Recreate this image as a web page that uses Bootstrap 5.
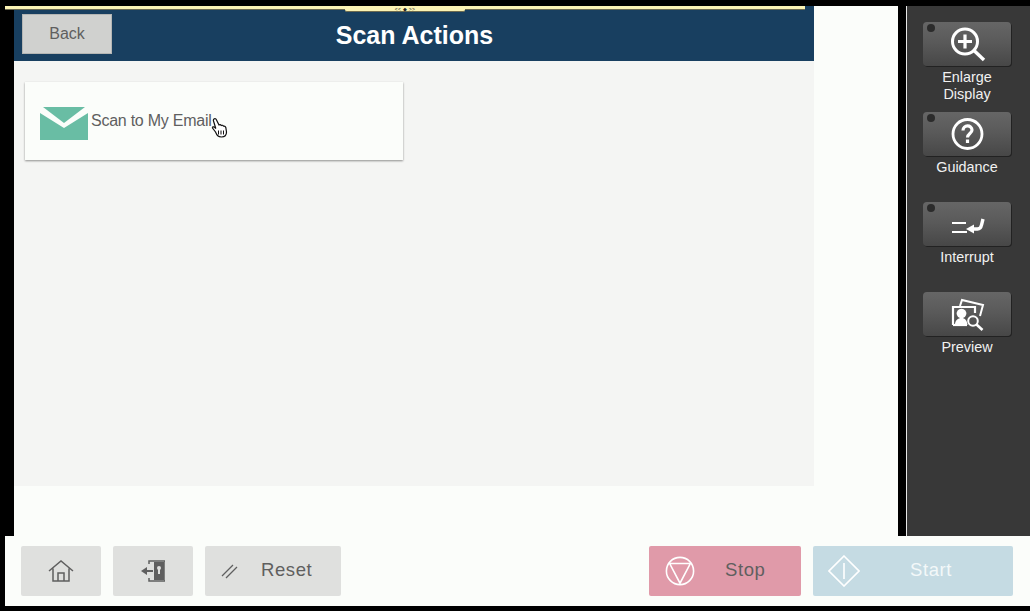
<!DOCTYPE html>
<html lang="en">
<head>
<meta charset="UTF-8">
<meta name="viewport" content="width=device-width, initial-scale=1">
<title>Scan Actions</title>
<link href="https://cdn.jsdelivr.net/npm/bootstrap@5.3.2/dist/css/bootstrap.min.css" rel="stylesheet">
<style>
    html, body { height: 611px; overflow: hidden; }
    body {
        background: #000;
        padding-top: 6px;
        font-family: "Liberation Sans", Arial, sans-serif;
        position: relative;
    }
    .top-strip {
        position: absolute; left: 5px; top: 6px; width: 800px; height: 4px; z-index: 5;
        background: #fbf3b4; border-bottom: 1px solid #6d6b50;
    }
    .top-tab {
        position: absolute; left: 340px; top: 2px; width: 120px; height: 4px;
        background: #fbf3b4; border-radius: 0 0 2px 2px;
        border-bottom: 1px solid #6d6b50;
    }
    .top-tab span {
        position: absolute; left: 0; right: 0; top: -2px; text-align: center;
        font-size: 5px; line-height: 6px; letter-spacing: .3px; color: #222;
    }
    .upper { height: 530px; padding-left: 14px; }
    .work { width: 884px; background: #fbfdfa; }
    .content { width: 800px; height: 480px; background: #f4f5f3; }
    .head {
        height: 55px; background: #183f60; padding-left: 8px; padding-top: 8px;
    }
    .back-btn {
        width: 90px; height: 40px; background: #d0d1cf; color: #5f5f5f;
        border: 1px solid #b5b6b4; font-size: 16px; line-height: 38px; text-align: center;
    }
    .head-title {
        position: absolute; left: 0; top: 13px; width: 800px; margin: 0;
        padding-left: 1px; text-align: center; color: #fff;
        font: bold 25px/32px "Liberation Sans", Arial, sans-serif;
    }
    .action-card {
        width: 378px; height: 78px; margin: 21px 0 0 11px; padding-left: 15px;
        background: #fbfdfa; color: #5f5f5f; font-size: 16px; letter-spacing: -.25px;
        box-shadow: 0 1px 2px rgba(0, 0, 0, .42);
    }
    .mail-icon { margin: 5px 3px 0 0; flex-shrink: 0; }
    .gap-line { width: 8px; }
    .side {
        flex: 1; background: #383838; border-left: 1px solid #e8e8e8;
        padding: 16px 0 0 16px;
    }
    .side-item { width: 88px; height: 90px; color: #f1f1f1; text-align: center; font-size: 14.4px; line-height: 17px; }
    .side-btn {
        position: relative; height: 44px; margin-bottom: 3px; border-radius: 4px;
        background: linear-gradient(#666, #5a5a5a 45%, #474747);
        box-shadow: 1px 1px 0 #222;
    }
    .side-btn i {
        position: absolute; left: 4px; top: 2px; width: 8px; height: 8px;
        border-radius: 50%; background: #2b2b2b;
    }
    .side-btn svg { position: absolute; left: 0; top: 0; }
    .bottom {
        height: 70px; margin-left: 5px; background: #fbfdfa;
        padding: 10px 17px 0 16px;
    }
    .foot-group { column-gap: 12px; }
    .foot-btn {
        height: 50px; border-radius: 2px; background: #dfe0de; color: #5f5f5f;
        font-size: 18.5px; letter-spacing: .6px;
    }
    .foot-btn span { margin-bottom: 2px; }
    .w-icon { width: 80px; }
    .w-reset { width: 136px; padding-left: 16px; }
    .w-reset span { margin-left: 22px; }
    .w-stop { width: 152px; background: #e09aa9; padding-left: 16px; }
    .w-stop span { margin-left: 30px; }
    .w-start { width: 200px; background: #c5dbe3; color: #f3f8f9; padding-left: 15px; }
    .w-start span { margin-left: 50px; }
    .hand { position: absolute; left: 211px; top: 118px; }
</style>
</head>
<body>
    <div class="top-strip"><div class="top-tab"><span>&lt;&lt; ◆ &gt;&gt;</span></div></div>

    <div class="upper d-flex">
        <div class="work">
            <div class="content">
                <div class="head position-relative">
                    <div class="back-btn">Back</div>
                    <h1 class="head-title">Scan Actions</h1>
                </div>
                <div class="action-card d-flex align-items-center">
                    <svg width="48" height="33" viewBox="0 0 48 33" class="mail-icon">
                        <path d="M3 0H45L24 16z" fill="#69bda4"/>
                        <path d="M0 6 24 21 48 6V33H0z" fill="#69bda4"/>
                    </svg>
                    <span>Scan to My Email</span>
                </div>
            </div>
        </div>
        <div class="gap-line"></div>
        <div class="side">
            <div class="side-item">
                <div class="side-btn"><i></i>
                    <svg width="88" height="44" viewBox="0 0 88 44" fill="none" stroke="#fff">
                        <circle cx="42" cy="19.500" r="12.500" stroke-width="3"/>
                        <path d="M42 12.500v14M35 19.500h14" stroke-width="3.200"/>
                        <path d="M51 28.500 61 38" stroke-width="3.400"/>
                    </svg>
                </div>
                Enlarge<br>Display
            </div>
            <div class="side-item">
                <div class="side-btn"><i></i>
                    <svg width="88" height="44" viewBox="0 0 88 44" fill="none" stroke="#fff">
                        <circle cx="44.500" cy="22" r="14.500" stroke-width="2.800"/>
                        <path d="M40 18.500c0-6 9-6 9-.5 0 3.500-4.500 3.500-4.500 7.500" stroke-width="3.200"/>
                        <path d="M44.500 27.500v3.500" stroke-width="3.200"/>
                    </svg>
                </div>
                Guidance
            </div>
            <div class="side-item">
                <div class="side-btn"><i></i>
                    <svg width="88" height="44" viewBox="0 0 88 44" fill="none" stroke="#fff">
                        <path d="M29 21h14M29 30h15" stroke-width="2"/>
                        <path d="M50 27h4.500c2.500 0 3.500-1.500 4-4l1.500-6" stroke-width="3.400"/>
                        <path d="M43 27 51 22.500v9z" fill="#fff" stroke="none"/>
                    </svg>
                </div>
                Interrupt
            </div>
            <div class="side-item">
                <div class="side-btn">
                    <svg width="88" height="44" viewBox="0 0 88 44" fill="none" stroke="#fff">
                        <path d="M37 14 39 8 60 13 57 24" stroke-width="2"/>
                        <path d="M30 33V15H52V21" stroke-width="2.200"/>
                        <path d="M30 33H44" stroke-width="2.200"/>
                        <path d="M32 33c0-5 3-6 5-7a4.800 4.800 0 1 1 3 0c2 1 4 2 4.500 7z" fill="#fff" stroke="none"/>
                        <circle cx="50" cy="29" r="4.800" stroke-width="2"/>
                        <path d="M53.500 32.500 59.500 38" stroke-width="2.600"/>
                    </svg>
                </div>
                Preview
            </div>
        </div>
    </div>

    <div class="bottom d-flex justify-content-between">
        <div class="d-flex foot-group">
            <div class="foot-btn w-icon d-flex align-items-center justify-content-center">
                <svg width="26" height="22" viewBox="0 0 26 22" fill="none" stroke="#5f5f5f" stroke-width="1.500">
                    <path d="M1 11 13 1l12 10M5 8.500V21H21V8.500"/>
                    <path d="M10 21V13H16V21"/>
                </svg>
            </div>
            <div class="foot-btn w-icon d-flex align-items-center justify-content-center">
                <svg width="24" height="22" viewBox="0 0 24 22">
                    <path d="M8 4V1H24V21H8V18" fill="none" stroke="#5f5f5f" stroke-width="1.500"/>
                    <rect x="13" y="2" width="10" height="18" fill="#5f5f5f"/>
                    <circle cx="18" cy="8" r="2" fill="#dfe0de"/>
                    <rect x="17" y="8" width="2" height="6" fill="#dfe0de"/>
                    <path d="M0 11 6 7v3h6v2H6v3z" fill="#5f5f5f"/>
                </svg>
            </div>
            <div class="foot-btn w-reset d-flex align-items-center">
                <svg width="18" height="16" viewBox="0 0 18 16" fill="none" stroke="#5f5f5f" stroke-width="1.300" class="flex-shrink-0">
                    <path d="M1 13 12 2M5 15 16 4"/>
                </svg>
                <span>Reset</span>
            </div>
        </div>
        <div class="d-flex foot-group">
            <div class="foot-btn w-stop d-flex align-items-center">
                <svg width="30" height="30" viewBox="0 0 32 32" fill="none" stroke="#fff" stroke-width="1.700" class="flex-shrink-0">
                    <circle cx="16" cy="16" r="14.500"/>
                    <path d="M5 8H27L16 29z"/>
                </svg>
                <span>Stop</span>
            </div>
            <div class="foot-btn w-start d-flex align-items-center">
                <svg width="32" height="32" viewBox="0 0 32 32" fill="none" stroke="#fff" stroke-width="1.600" class="flex-shrink-0">
                    <path d="M16 1 31 16 16 31 1 16z"/>
                    <path d="M16 8V24"/>
                </svg>
                <span>Start</span>
            </div>
        </div>
    </div>

    <svg class="hand" width="17" height="20" viewBox="0 0 17 20">
        <path d="M3 1c1-.8 2 0 2.500 1L8 7c1-.5 1.800-.3 2.300.5 1-.5 1.800-.2 2.200.6 1.200-.3 2 .4 2.300 1.400L15.500 14c0 3-2 5-5 5-3.500 0-4.500-1.500-6-5L1.500 10c-.3-1 1-1.700 2-.8l1.300 1.300L2.500 3c-.3-1 0-1.600.5-2z" fill="#fff" stroke="#111" stroke-width="1.200"/>
        <path d="M7.500 12.500v4M10 12.500v4M12.500 12.500v4" stroke="#111" stroke-width="1"/>
    </svg>
</body>
</html>
